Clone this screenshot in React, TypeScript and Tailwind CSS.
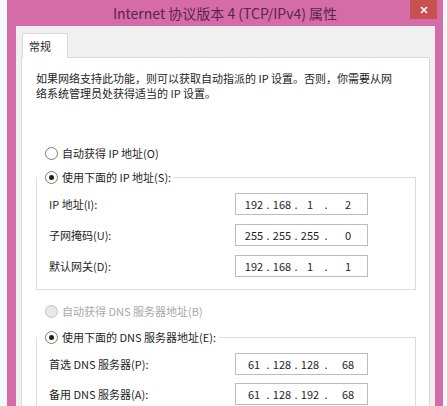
import React from "react";

const FONT = '"Noto Sans CJK SC", "Noto Sans", sans-serif';

function Radio({ checked, disabled, label }: { checked?: boolean; disabled?: boolean; label: string }) {
  return (
    <div className="flex items-center h-[20px] gap-[4px]">
      <div
        className={
          disabled
            ? "w-[13px] h-[13px] rounded-full border border-[#c4c4c4] bg-[#e8e8e8]"
            : "w-[13px] h-[13px] rounded-full border border-[#7c7c7c] bg-white flex items-center justify-center"
        }
      >
        {checked && <div className="w-[5px] h-[5px] rounded-full bg-[#1e1e1e]" />}
      </div>
      <span className={disabled ? "text-[#a8a8a8]" : "text-[#1e1e1e]"}>{label}</span>
    </div>
  );
}

function IpBox({ parts }: { parts: string[] }) {
  return (
    <div className="w-[133px] h-[22px] border border-[#bcbcbc] bg-white flex items-center pl-[6px] text-[11px] text-[#1e1e1e]">
      <span className="w-[24px] text-center">{parts[0]}</span>
      <span className="w-[4px] text-center">.</span>
      <span className="w-[24px] text-center">{parts[1]}</span>
      <span className="w-[4px] text-center">.</span>
      <span className="w-[24px] text-center">{parts[2]}</span>
      <span className="w-[8px] text-center">.</span>
      <span className="w-[36px] text-center">{parts[3]}</span>
    </div>
  );
}

function Row({ label, parts }: { label: string; parts: string[] }) {
  return (
    <>
      <div className="h-[22px] flex items-center text-[#1e1e1e]">{label}</div>
      <IpBox parts={parts} />
    </>
  );
}

export default function App() {
  return (
    <div
      className="w-[447px] h-[406px] overflow-hidden bg-[#f4fafa] pl-[7px] text-[11px] leading-[15px]"
      style={{ fontFamily: FONT }}
    >
      <div className="w-[436px] h-full bg-[#d56ca8] flex flex-col">
        <div className="shrink-0 h-[26px] relative flex items-center justify-center text-[14px] text-[#5a2350]">
          <span>Internet 协议版本 4 (TCP/IPv4) 属性</span>
          <div className="absolute right-[6px] top-0 w-[27px] h-[19px] bg-[#c75050] flex items-center justify-center">
            <svg width="8" height="8" viewBox="0 0 8 8">
              <path d="M1 1 L7 7 M7 1 L1 7" stroke="#ffffff" strokeWidth="1.7" />
            </svg>
          </div>
        </div>
        <div className="flex-1 ml-[9px] mr-[8px] bg-[#f0f0f0] px-[5px] pt-[7px] flex flex-col min-h-0 overflow-hidden">
          <div className="shrink-0 ml-[1px] w-[46px] h-[25px] border border-b-0 border-[#d9d9d9] bg-white -mb-px relative z-10 flex items-center pl-[6px] text-[#1e1e1e]">
            常规
          </div>
          <div className="shrink-0 border border-[#d9d9d9] bg-white pt-[13px] pl-[14px] pr-[13px] pb-[20px]">
            <p className="text-[#1e1e1e]">
              如果网络支持此功能，则可以获取自动指派的 IP 设置。否则，你需要从网
              <br />
              络系统管理员处获得适当的 IP 设置。
            </p>
            <div className="mt-[42px] pl-[9px]">
              <Radio label="自动获得 IP 地址(O)" />
            </div>
            <fieldset className="mt-[4px] border border-[#dcdcdc] pb-[12px]">
              <legend className="pl-[8px] pr-[3px]">
                <Radio checked label="使用下面的 IP 地址(S):" />
              </legend>
              <div className="mt-[6px] pl-[12px] grid grid-cols-[186px_133px] gap-y-[9px]">
                <Row label="IP 地址(I):" parts={["192", "168", "1", "2"]} />
                <Row label="子网掩码(U):" parts={["255", "255", "255", "0"]} />
                <Row label="默认网关(D):" parts={["192", "168", "1", "1"]} />
              </div>
            </fieldset>
            <div className="mt-[11px] pl-[9px]">
              <Radio disabled label="自动获得 DNS 服务器地址(B)" />
            </div>
            <fieldset className="mt-[6px] border border-[#dcdcdc] pb-[12px]">
              <legend className="pl-[8px] pr-[3px]">
                <Radio checked label="使用下面的 DNS 服务器地址(E):" />
              </legend>
              <div className="mt-[6px] pl-[12px] grid grid-cols-[186px_133px] gap-y-[8px]">
                <Row label="首选 DNS 服务器(P):" parts={["61", "128", "128", "68"]} />
                <Row label="备用 DNS 服务器(A):" parts={["61", "128", "192", "68"]} />
              </div>
            </fieldset>
          </div>
        </div>
      </div>
    </div>
  );
}
